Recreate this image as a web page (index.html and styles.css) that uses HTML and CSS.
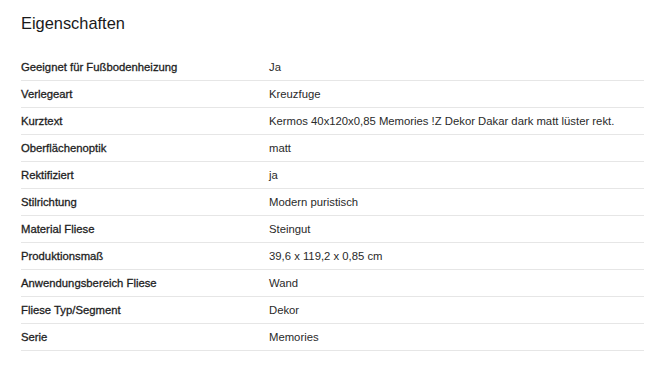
FILE: index.html
```html
<!DOCTYPE html>
<html lang="de">
<head>
<meta charset="utf-8">
<link rel="stylesheet" href="styles.css">
</head>
<body>
<section class="props">
  <h2 class="props-title">Eigenschaften</h2>
  <dl class="props-list">
    <div class="row"><dt>Geeignet für Fußbodenheizung</dt><dd>Ja</dd></div>
    <div class="row"><dt>Verlegeart</dt><dd>Kreuzfuge</dd></div>
    <div class="row"><dt>Kurztext</dt><dd>Kermos 40x120x0,85 Memories !Z Dekor Dakar dark matt lüster rekt.</dd></div>
    <div class="row"><dt>Oberflächenoptik</dt><dd>matt</dd></div>
    <div class="row"><dt>Rektifiziert</dt><dd>ja</dd></div>
    <div class="row"><dt>Stilrichtung</dt><dd>Modern puristisch</dd></div>
    <div class="row"><dt>Material Fliese</dt><dd>Steingut</dd></div>
    <div class="row"><dt>Produktionsmaß</dt><dd>39,6 x 119,2 x 0,85 cm</dd></div>
    <div class="row"><dt>Anwendungsbereich Fliese</dt><dd>Wand</dd></div>
    <div class="row"><dt>Fliese Typ/Segment</dt><dd>Dekor</dd></div>
    <div class="row"><dt>Serie</dt><dd>Memories</dd></div>
  </dl>
</section>
</body>
</html>
```

FILE: styles.css
```css
html, body {
  margin: 0;
  padding: 0;
  background: #fff;
}
body {
  font-family: "Liberation Sans", Arial, sans-serif;
  color: #1e1e1e;
}
.props {
  padding: 13px 1px 0 21px;
}
.props-title {
  margin: 0;
  font-size: 16.4px;
  line-height: 20px;
  font-weight: 400;
  color: #1a1a1a;
}
.props-list {
  margin: 21px 0 0 0;
  padding: 0;
}
.row {
  display: grid;
  grid-template-columns: 248px 1fr;
  height: 27px;
  box-sizing: border-box;
  align-items: center;
  border-bottom: 1px solid #e6e6e6;
  font-size: 11.3px;
  line-height: 14px;
}
.row dt {
  margin: 0;
  font-weight: 400;
  color: #1e1e1e;
  -webkit-text-stroke: 0.3px #1e1e1e;
}
.row dd {
  margin: 0;
  font-weight: 400;
  color: #2a2a2a;
}
```
